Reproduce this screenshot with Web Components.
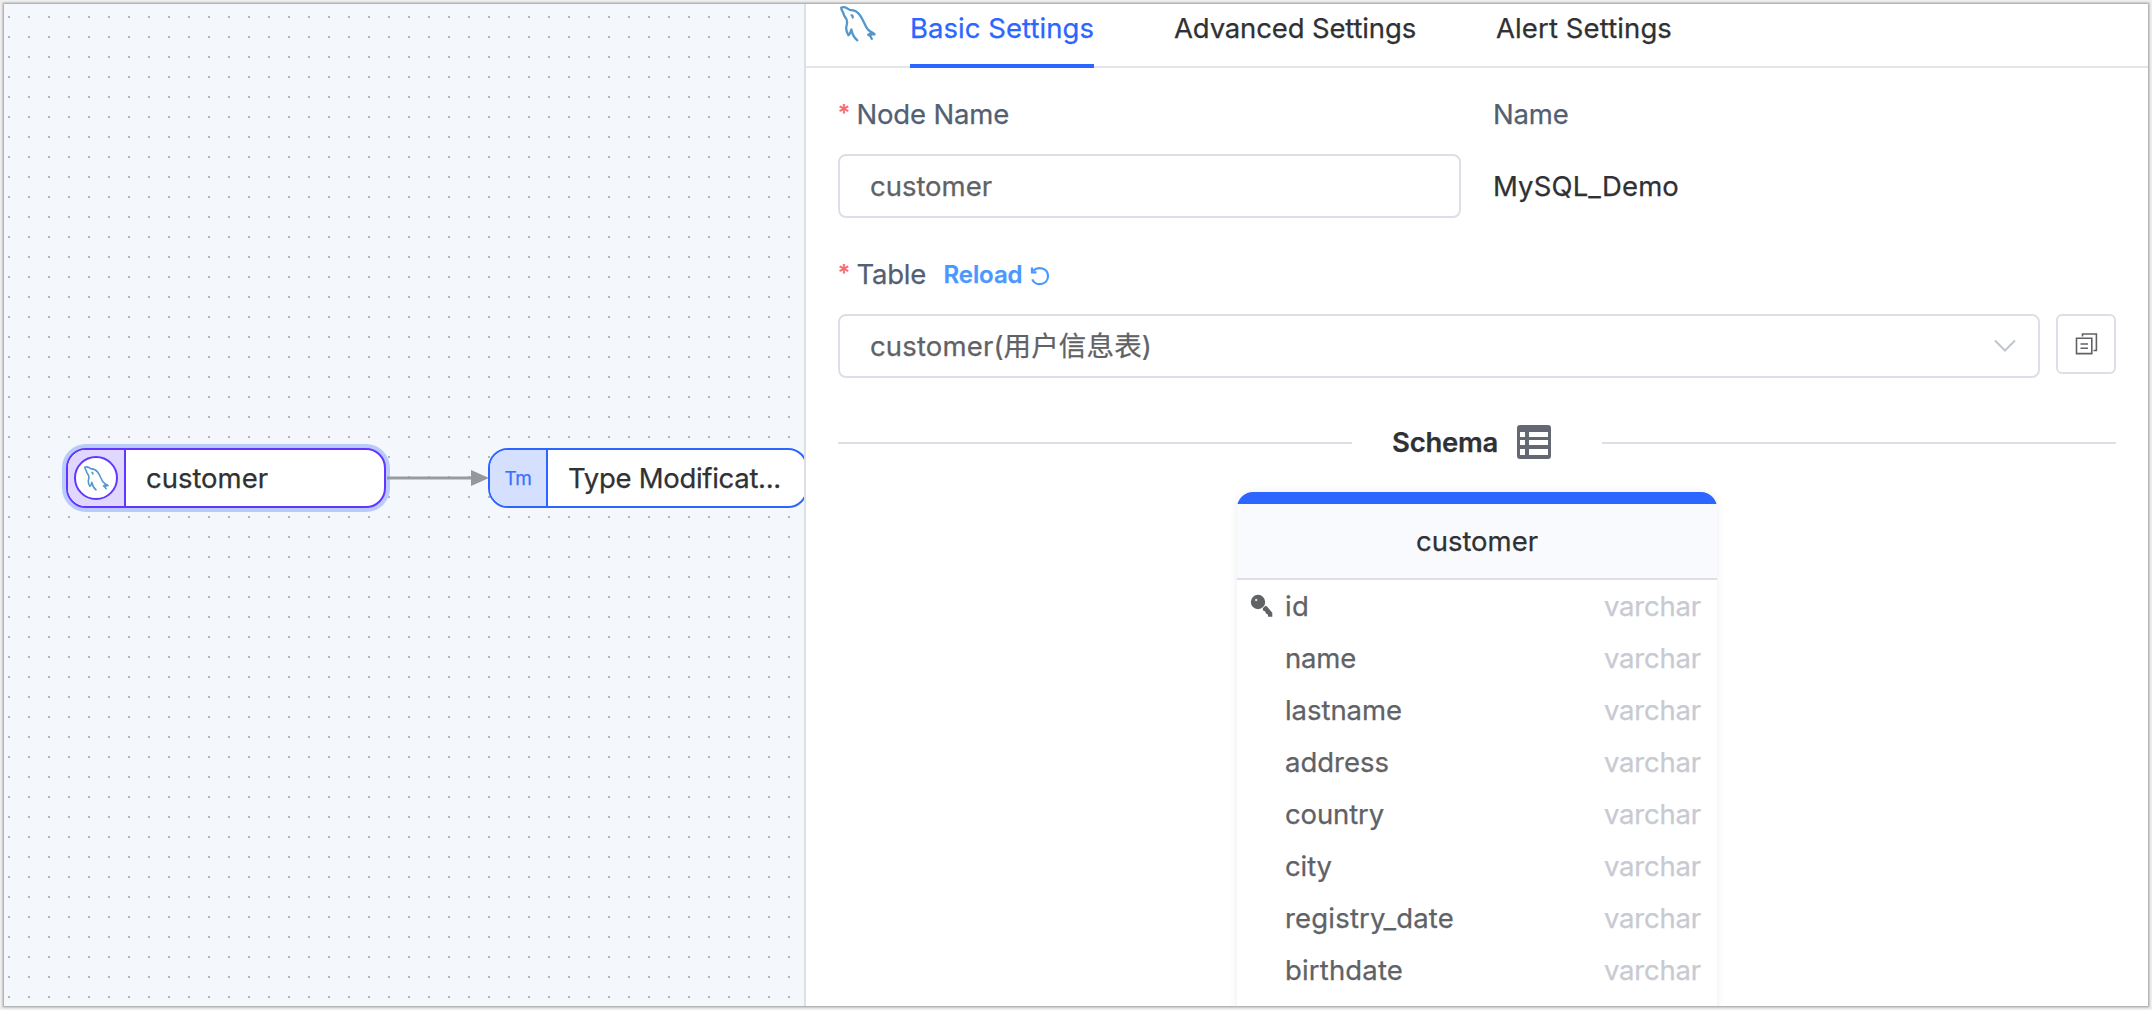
<!DOCTYPE html>
<html lang="en">
<head>
<meta charset="utf-8">
<title>Node settings</title>
<style>
html,body{margin:0;height:100%;overflow:hidden}
body{font-family:Inter,"Noto Sans CJK SC",sans-serif;font-size:27.5px;color:#303133;background:#f0f0f0;-webkit-text-stroke:.25px currentColor}
</style>
</head>
<body>
<app-window></app-window>
<script>
function define(name, html, setup) {
  customElements.define(name, class extends HTMLElement {
    connectedCallback() {
      if (this.shadowRoot) return;
      this.attachShadow({ mode: 'open' }).innerHTML = html;
      if (setup) setup(this, this.shadowRoot);
    }
  });
}

/* Text run tracked to occupy the width given in its "w" attribute. */
define('fit-text', `<style>:host{display:block;white-space:nowrap;flex:none}span{display:inline-block;-webkit-text-stroke:.25px currentColor}</style><span></span>`, (el, root) => {
  const span = root.querySelector('span');
  const text = el.getAttribute('text');
  span.textContent = text;
  const w = parseFloat(el.getAttribute('w'));
  if (w) {
    span.style.letterSpacing = (w - span.getBoundingClientRect().width) / text.length + 'px';
    el.style.width = w + 'px';
  }
});

define('mysql-icon', `<style>:host{display:block;flex:none}svg{display:block;width:100%;height:100%}</style>
<svg viewBox="0 0 36 36" fill="none" stroke="#5298cf" stroke-width="2.3" stroke-linecap="round" stroke-linejoin="round">
<path d="M1.200 1.800C3 .8 5.300 1.300 7 2.200C8.500 3 9 3.900 10.500 4.200C14.500 4 17.500 6 19.800 9C22.500 12.500 24 17 26.200 21C27.500 23.800 29 24.800 31 25.800C32.500 26.500 33.800 27.200 34.500 28.400C32.500 28.300 30 28.300 28.200 28.800C29.800 29.500 31.200 31 31.800 32.800M1.200 1.800C1.200 4 2.600 5.200 3.300 7C4 9 4.200 10 5.600 11.800C7.400 14.200 7.600 15.500 6.800 18.500C5.600 22.500 6.500 26.500 8.500 29.300C10 28.700 10.600 25.500 11.400 23.500C12.200 28.800 14.200 31.800 17.300 34.300"/>
<path d="M29 28.600L33.500 27.600L31 26.600Z"/>
<path d="M11.600 9.300C12.500 9.800 13 10.700 12.700 11.500"/></svg>`);

define('flow-node', `<style>
:host{display:flex;box-sizing:border-box;width:320px;height:60px;border:2px solid var(--c);border-radius:20px;background:#fff;overflow:hidden;align-items:center}
:host([selected]){box-shadow:0 0 0 4px #b9cbfd}
.i{box-sizing:border-box;width:58px;height:56px;border-right:2px solid var(--c);background:var(--b);display:flex;align-items:center;justify-content:center;flex:none}
.t{padding-left:20px}
</style><div class="i"><slot name="icon"></slot></div><div class="t"><slot></slot></div>`);

define('flow-canvas', `<style>
:host{display:block;position:relative;width:800px;height:1002px;overflow:hidden;flex:none;background:#f4f8fd}
.grid,.edge{position:absolute;left:0;top:0;width:100%;height:100%}
flow-node{position:absolute;top:444px}
.a{left:62px;--c:#6236ff;--b:#e0d7ff}.b{left:484px;--c:#2c65ff;--b:#d5e0ff}
.disc{box-sizing:border-box;width:44px;height:44px;border:2px solid #6236ff;border-radius:50%;background:#fff;display:flex;align-items:center;justify-content:center}
.disc mysql-icon{width:25px;height:25px}
.tm{font-size:19px;color:#3b70ff}
</style>
<svg class="grid"><defs><pattern id="d" width="20" height="20" patternUnits="userSpaceOnUse"><rect x="4" y="12" width="2" height="2" fill="#b2b6bb"/></pattern></defs><rect width="100%" height="100%" fill="url(#d)"/></svg>
<flow-node class="a" selected><div class="disc" slot="icon"><mysql-icon></mysql-icon></div><fit-text text="customer" w="122"></fit-text></flow-node>
<svg class="edge"><path d="M383 474H468" stroke="#9a9b9f" stroke-width="3"/><path d="M467 466L485 474L467 482Z" fill="#96979b"/></svg>
<flow-node class="b"><fit-text class="tm" slot="icon" text="Tm" w="27"></fit-text><fit-text text="Type Modificat..." w="213"></fit-text></flow-node>`);

define('settings-tabs', `<style>
:host{display:flex;box-sizing:border-box;height:64px;border-bottom:2px solid #e4e5eb;padding-left:32px;flex:none}
mysql-icon{width:36px;height:36px;margin:2px 34px 0 2px}
.tab{box-sizing:border-box;height:64px;line-height:49px;margin-right:80px}
.on{color:#2c65ff;border-bottom:4px solid #2c65ff}
</style><mysql-icon></mysql-icon>
<div class="tab on"><fit-text text="Basic Settings" w="184"></fit-text></div>
<div class="tab"><fit-text text="Advanced Settings" w="242"></fit-text></div>
<div class="tab"><fit-text text="Alert Settings" w="176"></fit-text></div>`);

define('form-field', `<style>
:host{display:block}
.l{display:flex;height:64px;margin-bottom:8px;align-items:center;color:#535f72;box-sizing:border-box}
.star{display:none;color:#f76b6b;width:18.5px;font-size:23px;font-weight:500;line-height:28px;padding-bottom:2px}
:host([required]) .star{display:block}
</style><div class="l"><span class="star">*</span><slot name="label"></slot></div><slot></slot>`);

define('text-box', `<style>
:host{display:flex;box-sizing:border-box;height:64px;border:2px solid #dddfe6;border-radius:8px;padding:0 22px 0 30px;align-items:center;justify-content:space-between;color:#606266;background:#fff}
</style><slot></slot>`);

define('schema-card', `<style>
:host{display:block;width:480px;height:520px;border-radius:16px 16px 0 0;box-shadow:0 0 8px rgba(0,0,0,.08);background:#fff;overflow:hidden}
.bar{height:12px;background:#2c65ff}
.h{box-sizing:border-box;height:76px;border-bottom:2px solid #dcdfe6;background:#f9fafe;display:flex;align-items:center;justify-content:center}
.r{display:flex;height:52px;align-items:center;padding:0 16px 0 13px;color:#606266}
.k{width:35px;height:24px}.k svg{display:block}
.v{margin-left:auto;color:#c8cad2}
</style><div class="bar"></div><div class="h"><fit-text text="customer" w="122"></fit-text></div><div class="rows"></div>`, (el, root) => {
  const key = '<svg width="24" height="24" fill="#606266"><circle cx="8" cy="8" r="7.200"/><circle cx="6.200" cy="6" r="1.200" fill="#ddd"/><path d="M12.800 14.200L15.500 11.800L17 12.600L21 17.200L22.300 18.800V22.800H18.200L17.800 20.500L16 19.500L15.200 17.400L13 16.600Z"/></svg>';
  root.querySelector('.rows').innerHTML = [['id', 24], ['name', 71], ['lastname', 117], ['address', 104], ['country', 99], ['city', 47], ['registry_date', 169], ['birthdate', 118]]
    .map(([n, w], i) => `<div class="r"><div class="k">${i ? '' : key}</div><fit-text text="${n}" w="${w}"></fit-text><fit-text class="v" text="varchar" w="97"></fit-text></div>`).join('');
});

define('settings-panel', `<style>
:host{display:flex;flex-direction:column;box-sizing:border-box;flex:1;height:1002px;border-left:2px solid #dcdfe6;background:#fff;overflow:hidden}
.body{padding:14px 32px 0;display:flex;flex-direction:column}
.row{display:flex}
.f1{width:623px;margin-right:32px}
.plain{display:flex;height:64px;align-items:center}
.second{margin-top:24px}
.reload{display:flex;align-items:center;color:#4898ff;font-size:24px;font-weight:600;margin-left:17.5px}
.reload svg{margin-left:7px;margin-top:3px}
.pick{display:flex;gap:16px;align-items:flex-start}
.pick text-box{flex:1}
.pick fit-text{line-height:34px}
.btn{box-sizing:border-box;width:60px;height:60px;border:2px solid #dddfe6;border-radius:6px;display:flex;align-items:center;justify-content:center}
.btn svg{margin-bottom:2px}
.div{display:flex;align-items:center;margin-top:44px;height:42px}
.line{flex:1;height:2px;background:#dcdfe6}
.mid{display:flex;align-items:center;width:250px;box-sizing:border-box;padding-left:40px;font-weight:600}
.mid fit-text{margin-bottom:2px}
.mid svg{margin-left:19px;margin-bottom:2px}
schema-card{margin:28px auto 0}
</style>
<settings-tabs></settings-tabs>
<div class="body">
<div class="row">
<form-field class="f1" required><fit-text slot="label" text="Node Name" w="152.500"></fit-text><text-box><fit-text text="customer" w="122"></fit-text></text-box></form-field>
<form-field><fit-text slot="label" text="Name" w="75.500"></fit-text><div class="plain"><fit-text text="MySQL_Demo" w="186"></fit-text></div></form-field>
</div>
<form-field class="second" required><fit-text slot="label" text="Table" w="69.500"></fit-text>
<div class="reload" slot="label"><fit-text text="Reload" w="79"></fit-text><svg width="20" height="20" fill="none" stroke="#4898ff" stroke-width="2.200"><path d="M3.200 4.600C8 .2 17.800 1.600 18 10C18 19.500 5 20.800 2.300 13.300"/><path d="M2 1.500V6.300H6.500"/></svg></div>
<div class="pick"><text-box><fit-text text="customer(用户信息表)" w="282"></fit-text><svg width="22" height="14" fill="none" stroke="#c0c4cc" stroke-width="2"><path d="M1 1.500L11 11.500L21 1.500"/></svg></text-box>
<div class="btn"><svg width="24" height="24" fill="none" stroke="#606266" stroke-width="1.600"><path d="M2.500 7.300H17.800V22.600H2.500ZM8.500 5.500V3H22.400V19.500H19.500M6.500 13H14M6.500 17.200H14"/></svg></div></div>
</form-field>
<div class="div"><div class="line"></div><div class="mid"><fit-text text="Schema" w="106"></fit-text><svg width="34" height="34"><path fill="#646872" fill-rule="evenodd" d="M3 0H31Q34 0 34 3V31Q34 34 31 34H3Q0 34 0 31V3Q0 0 3 0ZM3 7V12H8V7ZM12 7V12H31V7ZM3 15V20H8V15ZM12 15V20H31V15ZM3 24V30H8V24ZM12 24V30H31V24Z"/></svg></div><div class="line"></div></div>
<schema-card></schema-card>
</div>`);

define('app-window', `<style>
:host{display:flex;box-sizing:border-box;width:2152px;height:1010px;padding:4px;background:#efefef}
.win{display:flex;width:2144px;height:1002px;border-radius:1px;box-shadow:0 0 0 1px #b4b4b4,0 0 0 2px #cfcfcf,0 0 0 3px #e6e6e6}
</style><div class="win"><flow-canvas></flow-canvas><settings-panel></settings-panel></div>`);
</script>
</body>
</html>
